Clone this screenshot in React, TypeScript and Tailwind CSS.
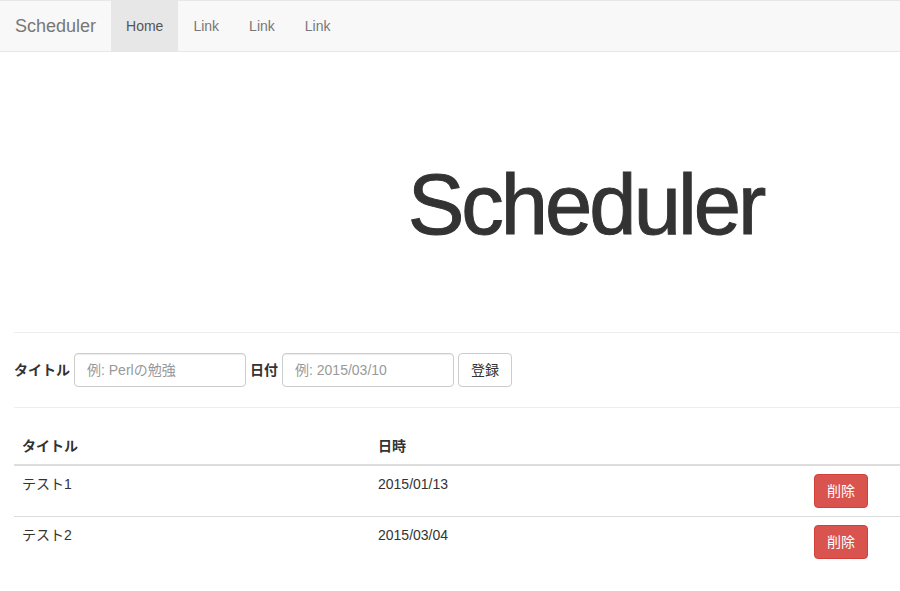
import React from "react";

const font = { fontFamily: '"Liberation Sans", "Noto Sans CJK JP", Arial, sans-serif' };

export default function App() {
  const rows = [
    { title: "テスト1", date: "2015/01/13" },
    { title: "テスト2", date: "2015/03/04" },
  ];
  return (
    <div className="w-full overflow-hidden bg-white text-[14px] leading-[20px] text-[#333]" style={font}>
      <div className="w-[1172px]">
        {/* navbar */}
        <nav className="flex h-[52px] border-y border-[#e7e7e7] bg-[#f8f8f8]">
          <div className="px-[15px] py-[15px] text-[18px] leading-[20px] text-[#777]">Scheduler</div>
          <div className="flex">
            <div className="bg-[#e7e7e7] px-[15px] py-[15px] text-[#555]">Home</div>
            <div className="px-[15px] py-[15px] text-[#777]">Link</div>
            <div className="px-[15px] py-[15px] text-[#777]">Link</div>
            <div className="px-[15px] py-[15px] text-[#777]">Link</div>
          </div>
        </nav>

        <div className="pl-[14px] pr-[15px]">
          {/* heading */}
          <div className="flex justify-center pt-[110px] pb-[65px]">
            <h1 className="text-[85px] leading-[85px] tracking-[-3px] text-[#333] [-webkit-text-stroke:1px_#333]">Scheduler</h1>
          </div>

          <div className="my-5 border-t border-[#eee]" />

          {/* form */}
          <form className="flex items-center gap-[4px]">
            <label className="font-bold">タイトル</label>
            <input
              className="h-[34px] w-[172px] rounded-[4px] border border-[#ccc] px-[12px] py-[6px] text-[14px] text-[#555] placeholder:text-[#999] shadow-[inset_0_1px_1px_rgba(0,0,0,0.075)]"
              placeholder="例: Perlの勉強"
            />
            <label className="font-bold">日付</label>
            <input
              className="h-[34px] w-[172px] rounded-[4px] border border-[#ccc] px-[12px] py-[6px] text-[14px] text-[#555] placeholder:text-[#999] shadow-[inset_0_1px_1px_rgba(0,0,0,0.075)]"
              placeholder="例: 2015/03/10"
            />
            <button type="button" className="h-[34px] rounded-[4px] border border-[#ccc] bg-white px-[12px] text-[14px] text-[#333]">
              登録
            </button>
          </form>

          <div className="my-5 border-t border-[#eee]" />

          {/* table */}
          <table className="w-full table-fixed border-collapse">
            <thead>
              <tr>
                <th className="w-[356px] border-b-2 border-[#ddd] p-[8px] text-left font-bold">タイトル</th>
                <th className="w-[436px] border-b-2 border-[#ddd] p-[8px] text-left font-bold">日時</th>
                <th className="border-b-2 border-[#ddd] p-[8px]"></th>
              </tr>
            </thead>
            <tbody>
              {rows.map((r, i) => (
                <tr key={i}>
                  <td className={`p-[8px] align-top ${i === 0 ? "" : "border-t border-[#ddd]"}`}>{r.title}</td>
                  <td className={`p-[8px] align-top ${i === 0 ? "" : "border-t border-[#ddd]"}`}>{r.date}</td>
                  <td className={`p-[8px] align-top ${i === 0 ? "" : "border-t border-[#ddd]"}`}>
                    <button type="button" className="h-[34px] rounded-[4px] border border-[#d43f3a] bg-[#d9534f] px-[12px] text-[14px] text-white">
                      削除
                    </button>
                  </td>
                </tr>
              ))}
            </tbody>
          </table>
        </div>
      </div>
    </div>
  );
}
